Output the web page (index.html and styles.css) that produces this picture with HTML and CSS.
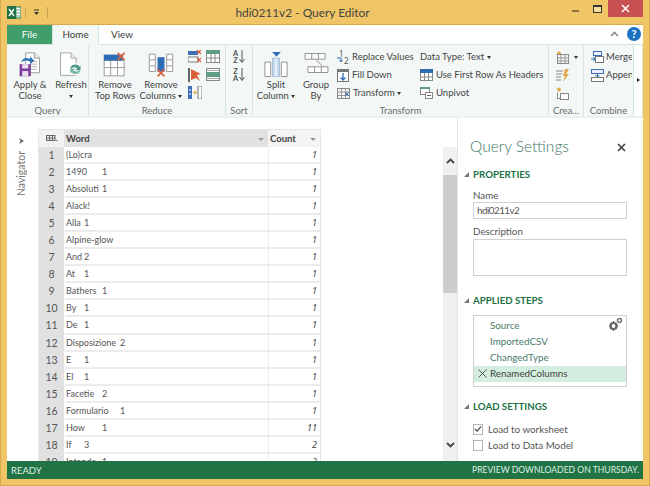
FILE: index.html
```html
<!DOCTYPE html>
<html lang="en">
<head>
<meta charset="utf-8">
<title>hdi0211v2 - Query Editor</title>
<link rel="stylesheet" href="styles.css">
</head>
<body>
<div class="window">
  <header class="titlebar">
    <div class="qat">
      <svg class="xl" width="14" height="13" viewBox="0 0 14 13"><rect x="5" y="1" width="9" height="11" fill="#fff" stroke="#207245"/><path d="M9 1v11M5 4h9M5 7h9M5 10h9" stroke="#5da57f"/><rect x="0" y="0" width="9" height="13" fill="#207245"/><path d="M2 3l5 7M7 3l-5 7" stroke="#fff" stroke-width="1.4"/></svg>
      <i class="qsep"></i>
      <svg class="qarrow" width="7" height="7" viewBox="0 0 7 7"><path d="M1 1h5" stroke="#333"/><path d="M1 3h5L3.500 6z" fill="#333"/></svg>
      <i class="qsep"></i>
    </div>
    <div class="title">hdi0211v2 - Query Editor</div>
    <div class="controls">
      <span class="ctl"><i class="min"></i></span>
      <span class="ctl"><i class="max"></i></span>
      <span class="close"><svg width="9" height="9" viewBox="0 0 9 9"><path d="M1 1l7 7M8 1l-7 7" stroke="#fff" stroke-width="1.500"/></svg></span>
    </div>
  </header>

  <nav class="tabs">
    <span class="tab file">File</span>
    <span class="tab active">Home</span>
    <span class="tab">View</span>
    <span class="tabs-right">
      <svg width="9" height="6" viewBox="0 0 9 6"><path d="M1 5l3.500-3.500L8 5" fill="none" stroke="#8a8a8a" stroke-width="1.600"/></svg>
      <span class="help">?</span>
    </span>
  </nav>

  <section class="ribbon">
    <div class="group g-query">
      <div class="gbody">
        <div class="big b-apply">
          <svg width="24" height="30" viewBox="0 0 24 30"><path d="M7 1h10l6 6v17H7z" fill="#fff" stroke="#8d8d8d"/><path d="M17 1v6h6" fill="#eee" stroke="#8d8d8d"/><path d="M13 11h7M13 14h7M13 17h7M13 20h7" stroke="#aaa"/><rect x="0" y="14" width="13" height="14" fill="#7c3f98"/><rect x="3" y="14" width="7" height="5" fill="#e9dff0"/><rect x="3" y="22" width="7" height="6" fill="#e9dff0"/><path d="M2 12c1-5 6-6 10-4V5l5 5-5 4v-3c-4-2-7-1-10 1z" fill="#2e74b5"/></svg>
          <span>Apply &amp;<br>Close</span>
        </div>
        <div class="big b-refresh">
          <svg width="26" height="30" viewBox="0 0 26 30"><path d="M1 1h12l6 6v20H1z" fill="#fff" stroke="#9a9a9a"/><path d="M13 1v6h6" fill="#eee" stroke="#9a9a9a"/><circle cx="18" cy="20" r="7" fill="#fff"/><path d="M12 19c1-5 8-6 11-2l1-2v6h-6l2-2c-2-2-5-2-6 0z" fill="#4c9a86"/><path d="M24 21c-1 5-8 6-11 2l-1 2v-6h6l-2 2c2 2 5 2 6 0z" fill="#7bb8a6"/></svg>
          <span>Refresh<br><b class="caret"></b></span>
        </div>
      </div>
      <div class="glabel">Query</div>
    </div>

    <div class="group g-reduce">
      <div class="gbody">
        <div class="big b-toprows">
          <svg width="26" height="30" viewBox="0 0 26 30"><rect x=".5" y="9.500" width="23" height="18" fill="#fff" stroke="#8f8f8f"/><path d="M8 9v18M16 9v18M1 18h23" stroke="#8f8f8f"/><rect x="0" y="3" width="22" height="7" fill="#2e6db4"/><path d="M16 1l8 8M24 1l-8 8" stroke="#d9603c" stroke-width="2"/></svg>
          <span>Remove<br>Top Rows</span>
        </div>
        <div class="big b-cols">
          <svg width="28" height="30" viewBox="0 0 28 30"><path d="M.5 2.500h7v20h-7zM20.500 2.500h7v20h-7z" fill="#fff" stroke="#8f8f8f"/><path d="M1 9h6M1 16h6M21 9h6M21 16h6" stroke="#8f8f8f"/><rect x="10" y="6" width="8" height="17" fill="#2e6db4"/><path d="M10 20l8 8M18 20l-8 8" stroke="#d9603c" stroke-width="2"/></svg>
          <span>Remove<br>Columns <b class="caret"></b></span>
        </div>
        <div class="mini-grid">
          <svg width="14" height="13" viewBox="0 0 14 13"><rect x="0" y="1" width="10" height="4" fill="#3c6fb5"/><rect x="0" y="7" width="10" height="5" fill="#fff" stroke="#777"/><path d="M9 0l4 4M13 0l-4 4M9 8l4 4M13 8l-4 4" stroke="#d9603c" stroke-width="1.200"/></svg>
          <svg width="14" height="13" viewBox="0 0 14 13"><rect x=".5" y=".5" width="13" height="12" fill="#fff" stroke="#888"/><rect x="0" y="0" width="14" height="4" fill="#5f9e83"/><path d="M5 4v9M9 4v9M1 8h13" stroke="#888"/></svg>
          <svg width="14" height="14" viewBox="0 0 14 14"><path d="M1 0v14" stroke="#666" stroke-width="2"/><path d="M3 1l10 5-4 1 3 6-4-3-5 2z" fill="#d9603c"/></svg>
          <svg width="14" height="13" viewBox="0 0 14 13"><rect x=".5" y=".5" width="13" height="12" fill="#fff" stroke="#888"/><rect x="0" y="4" width="14" height="5" fill="#5f9e83"/><path d="M1 2.500h12M1 10.500h12" stroke="#aaa"/></svg>
          <svg width="14" height="13" viewBox="0 0 14 13"><rect x="0" y="0" width="4" height="13" fill="#3c6fb5"/><rect x="10" y="0" width="4" height="13" fill="#fff" stroke="#777"/><path d="M1 4h2M1 8h2" stroke="#fff"/><path d="M5 6.500h4M7 4.500v4" stroke="#d8a23a"/></svg>
          <i></i>
        </div>
      </div>
      <div class="glabel">Reduce</div>
    </div>

    <div class="group g-sort">
      <div class="gbody sort-body">
        <span class="sorticon">
          <span class="az">A<br>Z</span>
          <svg width="6" height="13" viewBox="0 0 6 13"><path d="M3 0v12M.5 9L3 12.500 5.500 9" fill="none" stroke="#555"/></svg>
        </span>
        <span class="sorticon">
          <span class="az">Z<br>A</span>
          <svg width="6" height="13" viewBox="0 0 6 13"><path d="M3 0v12M.5 9L3 12.500 5.500 9" fill="none" stroke="#555"/></svg>
        </span>
      </div>
      <div class="glabel">Sort</div>
    </div>

    <div class="group g-transform">
      <div class="gbody">
        <div class="big b-split">
          <svg width="24" height="27" viewBox="0 0 24 27"><path d="M8 0h9l-4.500 5z" fill="#2e6db4"/><path d="M.5 10.500h6v15h-6zM17.500 10.500h6v15h-6z" fill="#fff" stroke="#8f8f8f"/><path d="M8.500 6.500h7v19h-7z" fill="#c9dcf0" stroke="#9db6cf"/><path d="M12 6v20" stroke="#fff"/></svg>
          <span>Split<br>Column <b class="caret"></b></span>
        </div>
        <div class="big b-group">
          <svg width="25" height="21" viewBox="0 0 25 21"><path d="M.5.500h21v6H.5zM7.500.500v6M14.500.500v6M3.500 14.500h21v6h-21zM10.500 14.500v6M17.500 14.500v6" fill="#fff" stroke="#8f8f8f"/><path d="M12 7l7 7" stroke="#8f8f8f"/></svg>
          <span>Group<br>By</span>
        </div>
        <div class="smalls s-fill">
          <div class="small">
            <svg class="replace" width="12" height="14" viewBox="0 0 12 14"><text x="2" y="7" class="svgnum">1</text><text x="7" y="14" class="svgnum">2</text><path d="M0 8h4v3M2.500 10L4 12l1.500-2" fill="none" stroke="#2e6db4"/></svg>
            <span>Replace Values</span>
          </div>
          <div class="small">
            <svg width="12" height="13" viewBox="0 0 12 13"><rect x=".5" y=".5" width="11" height="12" fill="#fff" stroke="#777"/><rect x="0" y="0" width="12" height="3" fill="#777"/><path d="M6 4v7M3.500 8.500L6 11l2.500-2.500" fill="none" stroke="#2e6db4" stroke-width="1.300"/></svg>
            <span>Fill Down</span>
          </div>
          <div class="small">
            <svg width="13" height="11" viewBox="0 0 13 11"><rect x=".5" y=".5" width="12" height="10" fill="#f4f4f4" stroke="#888"/><path d="M4.500 1v9M8.500 1v9M1 4h11M1 7.500h11" stroke="#999"/><path d="M8 4l4 4M12 4l-4 4" stroke="#3c6fb5"/></svg>
            <span>Transform <b class="caret"></b></span>
          </div>
        </div>
        <div class="smalls s-type">
          <div class="small plain"><span>Data Type: Text <b class="caret"></b></span></div>
          <div class="small">
            <svg width="13" height="12" viewBox="0 0 13 12"><rect x=".5" y=".5" width="12" height="11" fill="#fff" stroke="#888"/><rect width="13" height="4" fill="#2e6db4"/><path d="M4.500 4v8M8.500 4v8M1 8h12" stroke="#888"/></svg>
            <span>Use First Row As Headers</span>
          </div>
          <div class="small">
            <svg width="13" height="12" viewBox="0 0 13 12"><rect x=".5" y=".5" width="9" height="7" fill="#fff" stroke="#888"/><rect x="0" y="0" width="10" height="2" fill="#5f9e83"/><rect x="5.500" y="5.500" width="7" height="6" fill="#fff" stroke="#888"/><path d="M7 8.500h4" stroke="#666"/></svg>
            <span>Unpivot</span>
          </div>
        </div>
      </div>
      <div class="glabel">Transform</div>
    </div>

    <div class="group g-create">
      <div class="gbody col-icons">
        <div class="icon-row">
          <svg width="13" height="13" viewBox="0 0 13 13"><circle cx="3" cy="2.500" r="2" fill="#e1a84a"/><rect x="1.500" y="3.500" width="11" height="9" fill="#f6f6f6" stroke="#888"/><path d="M5 4v9M9 4v9M2 7h11M2 10h11" stroke="#999"/></svg>
          <b class="caret"></b>
        </div>
        <div class="icon-row">
          <svg width="13" height="13" viewBox="0 0 13 13"><path d="M0 2h7M0 5h6M0 8h5M0 11h5" stroke="#888"/><path d="M9 0h4L10 5h3l-6 8 2-6H7z" fill="#e1a84a"/></svg>
        </div>
        <div class="icon-row">
          <svg width="13" height="13" viewBox="0 0 13 13"><circle cx="3" cy="2.500" r="2" fill="#e1a84a"/><rect x="4.500" y="6.500" width="8" height="6" fill="#fff" stroke="#888"/><path d="M1.500 5.500v6h3" fill="none" stroke="#888"/></svg>
        </div>
      </div>
      <div class="glabel">Crea...</div>
    </div>

    <div class="group g-combine">
      <div class="gbody col-icons">
        <div class="small cut">
          <svg width="13" height="12" viewBox="0 0 13 12"><rect x="2.500" y=".5" width="8" height="4" fill="#eef" stroke="#3c6fb5"/><rect x="4.500" y="5.500" width="8" height="6" fill="#fff" stroke="#777"/><path d="M0 8h4M2.500 6L4 8 2.500 10" fill="none" stroke="#2e6db4"/></svg>
          <span>Merge</span>
        </div>
        <div class="small cut">
          <svg width="13" height="13" viewBox="0 0 13 13"><rect x=".5" y=".5" width="12" height="4" fill="#eef" stroke="#3c6fb5"/><rect x=".5" y="8.500" width="12" height="4" fill="#fff" stroke="#777"/><path d="M6.500 4v4M4.500 6l2 2 2-2" fill="none" stroke="#2e6db4"/></svg>
          <span>Append</span>
        </div>
      </div>
      <div class="glabel">Combine</div>
    </div>

    <div class="rib-more"><i></i></div>
  </section>

  <main class="main">
    <aside class="navigator">
      <svg class="navarrow" width="5" height="6" viewBox="0 0 5 6"><path d="M0 0l5 3-5 3 1.500-3z" fill="#666"/></svg>
      <span class="navtext">Navigator</span>
    </aside>

    <div class="tablearea">
      <div class="table">
        <div class="row head">
          <div class="num corner"><svg width="12" height="7" viewBox="0 0 12 7"><path d="M0 .5h9M0 3h9M0 5.500h9M.5 0v6M3.500 0v6M6.500 0v6M9 0v6" stroke="#666"/><path d="M10 5h2l-1 1.500z" fill="#666"/></svg></div>
          <div class="word">Word<i class="fil"></i></div>
          <div class="count">Count<i class="fil"></i></div>
        </div>
        <div class="row"><div class="num">1</div><div class="word">(Lo)cra</div><div class="count">1</div></div>
        <div class="row"><div class="num">2</div><div class="word">1490	1</div><div class="count">1</div></div>
        <div class="row"><div class="num">3</div><div class="word">Absoluti	1</div><div class="count">1</div></div>
        <div class="row"><div class="num">4</div><div class="word">Alack!</div><div class="count">1</div></div>
        <div class="row"><div class="num">5</div><div class="word">Alla	1</div><div class="count">1</div></div>
        <div class="row"><div class="num">6</div><div class="word">Alpine-glow</div><div class="count">1</div></div>
        <div class="row"><div class="num">7</div><div class="word">And	2</div><div class="count">1</div></div>
        <div class="row"><div class="num">8</div><div class="word">At	1</div><div class="count">1</div></div>
        <div class="row"><div class="num">9</div><div class="word">Bathers	1</div><div class="count">1</div></div>
        <div class="row"><div class="num">10</div><div class="word">By	1</div><div class="count">1</div></div>
        <div class="row"><div class="num">11</div><div class="word">De	1</div><div class="count">1</div></div>
        <div class="row"><div class="num">12</div><div class="word">Disposizione	2</div><div class="count">1</div></div>
        <div class="row"><div class="num">13</div><div class="word">E	1</div><div class="count">1</div></div>
        <div class="row"><div class="num">14</div><div class="word">El	1</div><div class="count">1</div></div>
        <div class="row"><div class="num">15</div><div class="word">Facetie	2</div><div class="count">1</div></div>
        <div class="row"><div class="num">16</div><div class="word">Formulario	1</div><div class="count">1</div></div>
        <div class="row"><div class="num">17</div><div class="word">How	1</div><div class="count">11</div></div>
        <div class="row"><div class="num">18</div><div class="word">If	3</div><div class="count">2</div></div>
        <div class="row"><div class="num">19</div><div class="word">Intende	1</div><div class="count">3</div></div>
      </div>
    </div>

    <div class="scrollbar">
      <svg class="sb-up" width="9" height="6" viewBox="0 0 9 6"><path d="M1 5l3.500-3.500L8 5" fill="none" stroke="#444" stroke-width="1.800"/></svg>
      <div class="sb-thumb"></div>
      <svg class="sb-down" width="9" height="6" viewBox="0 0 9 6"><path d="M1 1l3.500 3.500L8 1" fill="none" stroke="#444" stroke-width="1.800"/></svg>
    </div>

    <aside class="settings">
      <div class="set-head">
        <h1>Query Settings</h1>
        <svg class="set-close" width="9" height="9" viewBox="0 0 9 9"><path d="M1 1l7 7M8 1l-7 7" stroke="#444" stroke-width="1.700"/></svg>
      </div>
      <h2 class="sec s-props"><i></i>PROPERTIES</h2>
      <label class="lab l-name">Name</label>
      <div class="input">hdi0211v2</div>
      <label class="lab l-desc">Description</label>
      <div class="textarea"></div>
      <h2 class="sec s-steps"><i></i>APPLIED STEPS</h2>
      <div class="steps">
        <div class="step">Source<svg class="gears" width="14" height="14" viewBox="0 0 14 14"><circle cx="4.500" cy="9" r="3" fill="none" stroke="#666" stroke-width="2.200"/><path d="M4.500 4v2M4.500 12v2M0 9h2M7 9h2M1.500 6l1 1M6.500 11l1 1M7.500 6l-1 1M1.500 12l1-1" stroke="#666" stroke-width="1.300"/><circle cx="10.500" cy="3.500" r="2" fill="none" stroke="#777" stroke-width="1.500"/></svg></div>
        <div class="step">ImportedCSV</div>
        <div class="step">ChangedType</div>
        <div class="step current"><svg class="stepx" width="9" height="9" viewBox="0 0 9 9"><path d="M.5.500l8 8M8.500.500l-8 8" stroke="#555"/></svg>RenamedColumns</div>
      </div>
      <h2 class="sec s-load"><i></i>LOAD SETTINGS</h2>
      <div class="check c-one"><span class="box"><svg width="9" height="8" viewBox="0 0 9 8"><path d="M1 4l2.500 2.500L8 1" fill="none" stroke="#444" stroke-width="1.300"/></svg></span>Load to worksheet</div>
      <div class="check"><span class="box"></span>Load to Data Model</div>
    </aside>
  </main>

  <footer class="status">
    <span>READY</span>
    <span class="status-right">PREVIEW DOWNLOADED ON THURSDAY.</span>
  </footer>
</div>
</body>
</html>
```

FILE: styles.css
```css
* { box-sizing: border-box; }
html, body { margin: 0; padding: 0; }
body {
  width: 650px;
  height: 486px;
  overflow: hidden;
  font-family: "Lato", "Noto Sans", sans-serif;
  font-size: 9.8px;
  color: #444;
}
.window {
  width: 650px;
  height: 486px;
  display: flex;
  flex-direction: column;
  background: #f0c566;
  border: 1px solid #d9a94c;
  border-top: 0;
  padding: 0 6px 6px;
  overflow: hidden;
}

/* title bar */
.titlebar {
  height: 24px;
  flex: none;
  display: flex;
  align-items: flex-start;
}
.qat { display: flex; align-items: center; height: 24px; flex: none; }
.xl { margin-right: 4px; }
.qsep { width: 1px; height: 11px; background: #c9a455; }
.qarrow { margin: 0 7px; }
.title { flex: 1; text-align: center; font-size: 11.9px; line-height: 26px; color: #444; }
.controls { width: 86px; flex: none; display: flex; justify-content: flex-end; align-items: flex-start; }
.ctl { width: 22px; height: 17px; display: flex; align-items: center; justify-content: center; }
.min { width: 7px; height: 2px; background: #8c7340; margin-top: 5px; }
.max { width: 9px; height: 8px; border: 1px solid #333; border-top-width: 2px; background: #f6dc99; }
.close { width: 35px; height: 17px; background: #c75050; display: flex; align-items: center; justify-content: center; }

/* tabs */
.tabs {
  height: 20px;
  flex: none;
  background: #fff;
  border-top: 1px solid #d9a94c;
  display: flex;
  align-items: stretch;
  font-size: 9.8px;
  line-height: 19px;
}
.tab { width: 46px; text-align: center; color: #3a3a3a; }
.tab.file { background: #3f9e6c; color: #fff; width: 45px; height: 19px; }
.tab.active { width: 47px; height: 20px; background: #f3f8f7; border: 1px solid #d3e6df; border-width: 0 1px; position: relative; z-index: 1; }
.tabs-right { margin-left: auto; display: flex; align-items: center; gap: 8px; padding-right: 2px; padding-bottom: 1px; }
.help {
  width: 14px; height: 14px; border-radius: 50%;
  background: #1b72c0; color: #fff; font-weight: 700; font-size: 11px;
  line-height: 14px; text-align: center; display: block;
}

/* ribbon */
.ribbon {
  height: 74px;
  flex: none;
  background: #f3f8f7;
  border-top: 1px solid #d3e6df;
  border-bottom: 2px solid #eaf2ef;
  display: flex;
  font-size: 9.5px;
  line-height: 10.5px;
  color: #444;
}
.group {
  display: flex;
  flex-direction: column;
  border-right: 1px solid #d8e2df;
  margin: 1px 0;
  flex: none;
  overflow: hidden;
}
.gbody { height: 59px; display: flex; flex: none; }
.glabel { text-align: center; color: #6b6b6b; line-height: 12px; white-space: nowrap; }
.big { display: flex; flex-direction: column; align-items: center; text-align: center; padding-top: 6px; white-space: nowrap; flex: none; }
.big svg { display: block; flex: none; height: 26px; margin-bottom: 2px; }
.big span { display: block; }
.caret {
  display: inline-block; width: 0; height: 0; vertical-align: 1px;
  border-left: 2.500px solid transparent; border-right: 2.500px solid transparent; border-top: 3px solid #333;
}
.g-query { width: 82px; }
.b-apply { width: 44px; margin-left: 1px; }
.b-refresh { width: 34px; margin-left: 2px; }
.g-reduce { width: 137px; }
.b-toprows { width: 46px; margin-left: 3px; }
.b-cols { width: 44px; margin-left: 1px; }
.mini-grid {
  margin: 4px 0 0 5px;
  display: grid;
  grid-template-columns: 14px 14px;
  column-gap: 4px;
  grid-auto-rows: 18px;
}
.g-sort { width: 27px; }
.sort-body { flex-direction: column; align-items: center; gap: 4px; padding-top: 4px; }
.sorticon { display: flex; gap: 1px; align-items: flex-start; }
.az { font-size: 7.5px; line-height: 7px; text-align: center; font-weight: 700; color: #555; }
.g-transform { width: 296px; }
.b-split { width: 44px; margin-left: 1px; }
.b-group { width: 34px; margin-left: 1px; }
.b-group svg { height: 20px; margin-top: 1px; margin-bottom: 7px; }
.smalls { display: flex; flex-direction: column; padding-top: 2px; flex: none; }
.s-fill { width: 83px; margin-left: 4px; }
.small { height: 18px; display: flex; align-items: center; gap: 3px; white-space: nowrap; flex: none; }
.small svg { flex: none; }
.replace { overflow: visible; }
.svgnum { font-size: 8px; fill: #555; font-family: "Noto Sans", sans-serif; }
.g-create { width: 35px; }
.col-icons { flex-direction: column; padding: 2px 0 0 7px; }
.icon-row { height: 18px; display: flex; align-items: center; gap: 5px; flex: none; }
.g-combine { width: 49px; border-right: 0; }
.small.cut { gap: 2px; width: 41px; overflow: hidden; }
.rib-more {
  width: 10px; flex: none; background: #fff;
  border-left: 1px solid #d3e6df;
  border-right: 1px solid #d3e6df;
  display: flex; align-items: center; justify-content: center;
  padding-bottom: 2px;
}
.rib-more i { border-left: 3px solid #222; border-top: 2.500px solid transparent; border-bottom: 2.500px solid transparent; }

/* main */
.main { flex: 1; min-height: 0; background: #fff; display: flex; overflow: hidden; }
.navigator { width: 31px; flex: none; display: flex; flex-direction: column; align-items: center; padding: 20px 3px 0 0; }
.navarrow { flex: none; }
.navtext {
  writing-mode: vertical-rl; transform: rotate(180deg);
  color: #777; font-size: 10.5px; margin-top: 7px; line-height: 14px;
}
.tablearea { width: 405px; flex: none; padding-top: 11px; overflow: hidden; }
.table { width: 283px; border-left: 1px solid #e6e6e6; border-right: 1px solid #e6e6e6; }
.row { display: flex; height: 17.05px; line-height: 16px; color: #555; font-size: 9px; }
.head { height: 18px; line-height: 17px; font-size: 9.5px; font-weight: 700; color: #444; border-top: 1px solid #e6e6e6; }
.num { width: 25px; flex: none; background: #e1e1e1; color: #555; text-align: center; border-bottom: 2px solid #e1e1e1; font-size: 10.5px; }
.corner { background: #f2f2f2; border: 0; display: flex; align-items: center; justify-content: center; }
.word {
  width: 203px; flex: none; padding-left: 1px; margin-left: 1px;
  border-bottom: 2px solid #ececec; white-space: pre; tab-size: 18px; position: relative;
}
.count {
  flex: 1; text-align: right; padding-right: 3px; font-style: italic;
  font-family: "Noto Sans", sans-serif;
  border-left: 1px solid #ececec; border-bottom: 2px solid #ececec; color: #444;
}
.head .word { background: #e1e1e1; border: 0; margin-left: 0; padding-left: 2px; width: 204px; }
.head .count {
  background: #f4f4f4; border: 0; text-align: left; font-style: normal;
  font-family: "Lato", "Noto Sans", sans-serif; padding-left: 2px; position: relative;
}
.fil {
  position: absolute; right: 4px; top: 8px; width: 0; height: 0;
  border-left: 3.5px solid transparent; border-right: 3.5px solid transparent; border-top: 3px solid #999;
}

/* scrollbar */
.scrollbar {
  width: 14px; flex: none; margin-top: 29px; background: #f0f0f0;
  display: flex; flex-direction: column; align-items: center; padding-bottom: 13px;
}
.sb-up { flex: none; margin: 11px 0; }
.sb-thumb { width: 14px; height: 118px; background: #cdcdcd; flex: none; }
.sb-down { margin-top: auto; flex: none; }

/* settings */
.settings { flex: 1; min-width: 0; border-left: 1px solid #e4e4e4; padding: 0 16px 0 15px; }
.set-head { display: flex; align-items: center; justify-content: space-between; height: 32px; margin: 12px 0 5px -3px; padding-right: 1px; }
.set-head h1 { margin: 0; font-weight: 300; font-size: 15.5px; color: #3f7a66; line-height: 32px; }
.set-close { margin-top: 3px; }
.sec { margin: 0; font-size: 9.7px; font-weight: 700; color: #217346; line-height: 14px; position: relative; }
.sec i {
  position: absolute; left: -9px; top: 5px; width: 0; height: 0;
  border-left: 5px solid transparent; border-bottom: 5px solid #777;
}
.lab { display: block; color: #555; line-height: 14px; }
.l-name { margin-top: 7px; }
.input { height: 17px; border: 1px solid #d0d0d0; line-height: 15px; padding-left: 3px; color: #555; letter-spacing: -.5px; }
.l-desc { margin-top: 5px; }
.textarea { height: 37px; border: 1px solid #d0d0d0; margin-top: 1px; }
.s-steps { margin-top: 17px; }
.steps { height: 72px; border: 1px solid #d0d0d0; margin-top: 8px; padding-top: 1px; }
.step { height: 16px; line-height: 15px; padding-left: 16px; color: #4a7a68; position: relative; }
.step:first-child { margin-top: 1px; }
.gears { position: absolute; right: 3px; top: -1px; }
.current { background: #d3eddf; color: #444; }
.stepx { position: absolute; left: 4px; top: 3px; }
.s-load { margin-top: 12px; }
.check { display: flex; align-items: center; height: 16px; gap: 5px; color: #555; }
.c-one { margin-top: 8px; }
.box { width: 10px; height: 11px; border: 1px solid #b5b5b5; display: flex; align-items: center; justify-content: center; flex: none; }

/* status */
.status {
  height: 18px; flex: none; background: #217346; color: #dcefe4;
  display: flex; justify-content: space-between; align-items: center;
  font-size: 9.5px; padding: 0 4px;
}
.status-right { font-size: 8.6px; }
```
